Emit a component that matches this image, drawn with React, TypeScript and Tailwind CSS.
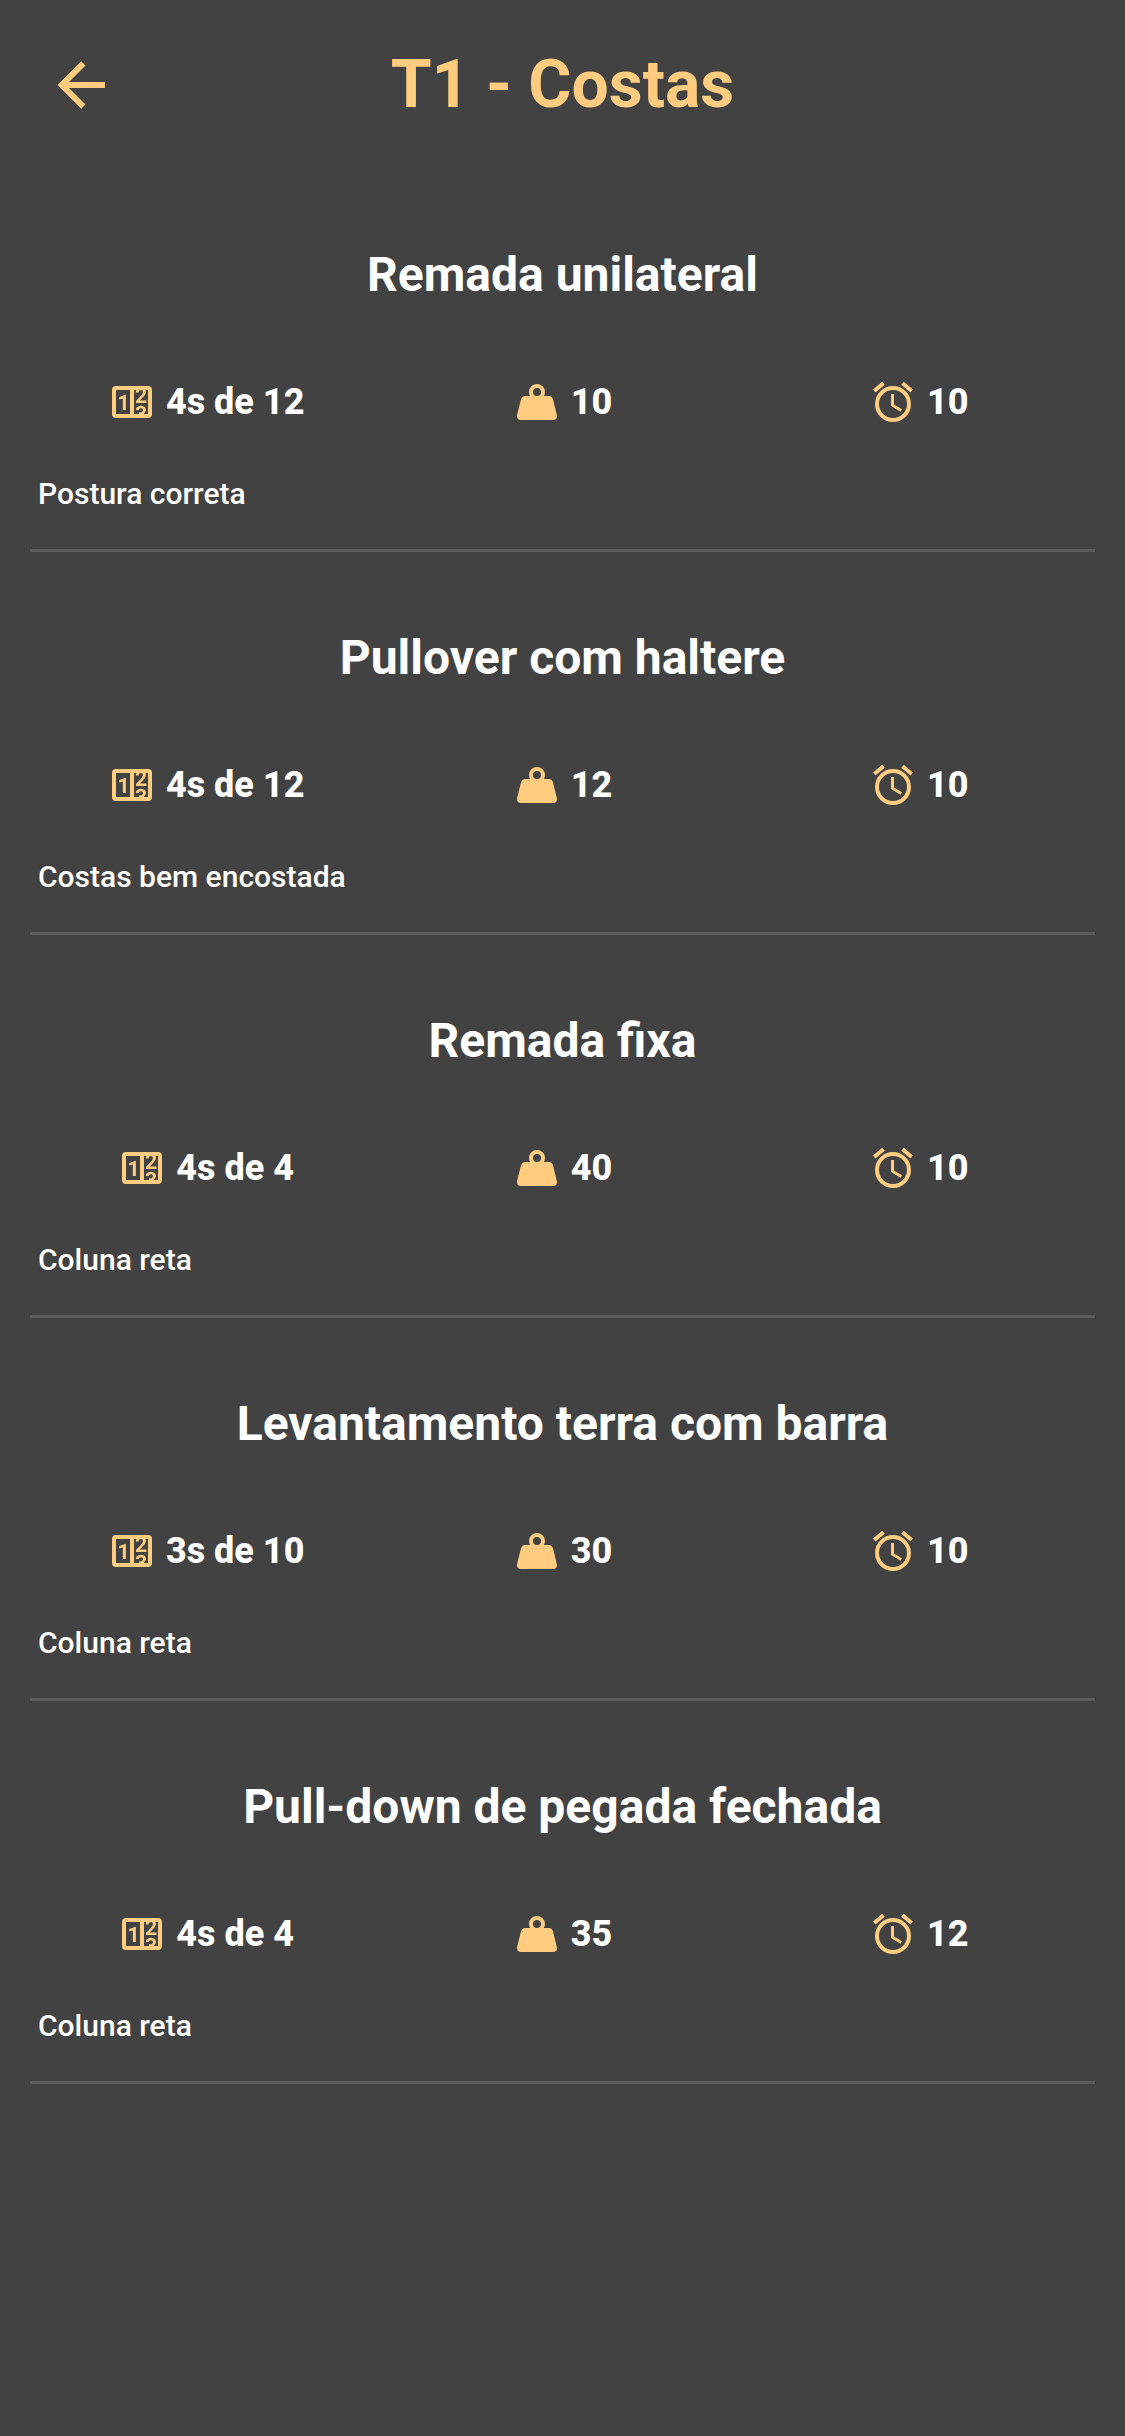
import React from "react";

const COUNTER_PATH =
  "M4,4H20A2,2 0 0,1 22,6V18A2,2 0 0,1 20,20H4A2,2 0 0,1 2,18V6A2,2 0 0,1 4,4M4,6V18H11V6H4M20,18V6H18.76C19,6.54 18.95,7.07 18.95,7.13C18.88,7.8 18.41,8.5 18.24,8.75L15.91,11.3L19.23,11.28L19.24,12.5L14.04,12.47L14,11.47C14,11.47 17.05,8.24 17.2,7.95C17.34,7.67 17.91,6 16.5,6C15.27,6.05 15.41,7.3 15.41,7.3L13.87,7.31C13.87,7.31 13.88,6.65 14.25,6H13V18H15.58L15.57,17.14L16.54,17.13C16.54,17.13 17.45,16.97 17.46,16.08C17.5,15.08 16.65,15.08 16.5,15.08C16.37,15.08 15.43,15.13 15.43,15.95H13.91C13.91,15.95 13.95,13.89 16.5,13.89C19.1,13.89 18.96,15.91 18.96,15.91C18.96,15.91 19,17.16 17.85,17.63L18.37,18H20M8.92,16H7.42V10.2L5.62,10.76V9.53L8.76,8.41H8.92V16Z";
const WEIGHT_PATH =
  "M12,3A4,4 0 0,1 16,7C16,7.73 15.81,8.41 15.46,9H18C18.95,9 19.75,9.67 19.95,10.56C21.96,18.57 22,18.78 22,19A2,2 0 0,1 20,21H4A2,2 0 0,1 2,19C2,18.78 2.04,18.57 4.05,10.56C4.25,9.67 5.05,9 6,9H8.54C8.19,8.41 8,7.73 8,7A4,4 0 0,1 12,3M12,5A2,2 0 0,0 10,7A2,2 0 0,0 12,9A2,2 0 0,0 14,7A2,2 0 0,0 12,5Z";
const ALARM_PATH =
  "M22,5.72L17.4,1.86L16.11,3.39L20.71,7.25L22,5.72M7.88,3.39L6.6,1.86L2,5.71L3.29,7.24L7.88,3.39M12.5,8H11V14L15.75,16.85L16.5,15.62L12.5,13.25V8M12,4A9,9 0 0,0 3,13A9,9 0 0,0 12,22A9,9 0 0,0 21,13A9,9 0 0,0 12,4M12,20A7,7 0 0,1 5,13A7,7 0 0,1 12,6A7,7 0 0,1 19,13A7,7 0 0,1 12,20Z";
const BACK_PATH = "M20,11V13H8L13.5,18.5L12.08,19.92L4.16,12L12.08,4.08L13.5,5.5L8,11H20Z";

type Exercise = {
  name: string;
  series: string;
  load: string;
  rest: string;
  note: string;
};

const exercises: Exercise[] = [
  { name: "Remada unilateral", series: "4s de 12", load: "10", rest: "10", note: "Postura correta" },
  { name: "Pullover com haltere", series: "4s de 12", load: "12", rest: "10", note: "Costas bem encostada" },
  { name: "Remada fixa", series: "4s de 4", load: "40", rest: "10", note: "Coluna reta" },
  { name: "Levantamento terra com barra", series: "3s de 10", load: "30", rest: "10", note: "Coluna reta" },
  { name: "Pull-down de pegada fechada", series: "4s de 4", load: "35", rest: "12", note: "Coluna reta" },
];

function Stat({ path, value }: { path: string; value: string }) {
  return (
    <div className="flex items-center justify-center gap-[10px]">
      <svg viewBox="0 0 24 24" className="size-12 fill-[#ffcc80]" aria-hidden="true">
        <path d={path} />
      </svg>
      <span className="text-4xl font-extrabold">{value}</span>
    </div>
  );
}

function ExerciseItem({ exercise }: { exercise: Exercise }) {
  return (
    <li className="border-b-3 border-[#5c5c5c] pt-[78px] pb-[37px]">
      <h2 className="text-center text-5xl leading-14 font-bold">{exercise.name}</h2>
      <div className="mt-[75px] grid grid-cols-3 gap-x-1">
        <Stat path={COUNTER_PATH} value={exercise.series} />
        <Stat path={WEIGHT_PATH} value={exercise.load} />
        <Stat path={ALARM_PATH} value={exercise.rest} />
      </div>
      <p className="mt-[50px] px-2 text-3xl leading-9 font-medium">{exercise.note}</p>
    </li>
  );
}

export default function App() {
  return (
    <div className="min-h-screen bg-[#424242] font-['Roboto',sans-serif] text-white">
      <header className="grid grid-cols-[72px_1fr_72px] items-center px-[45px] pt-11">
        <button type="button" aria-label="Voltar" className="size-18">
          <svg viewBox="0 0 24 24" className="size-full fill-[#ffcc80]" aria-hidden="true">
            <path d={BACK_PATH} />
          </svg>
        </button>
        <h1 className="text-center text-[66px] leading-[82px] font-bold text-[#ffcc80]">T1 - Costas</h1>
      </header>
      <main className="px-[30px] pt-[43px]">
        <ul>
          {exercises.map((exercise) => (
            <ExerciseItem key={exercise.name} exercise={exercise} />
          ))}
        </ul>
      </main>
    </div>
  );
}
